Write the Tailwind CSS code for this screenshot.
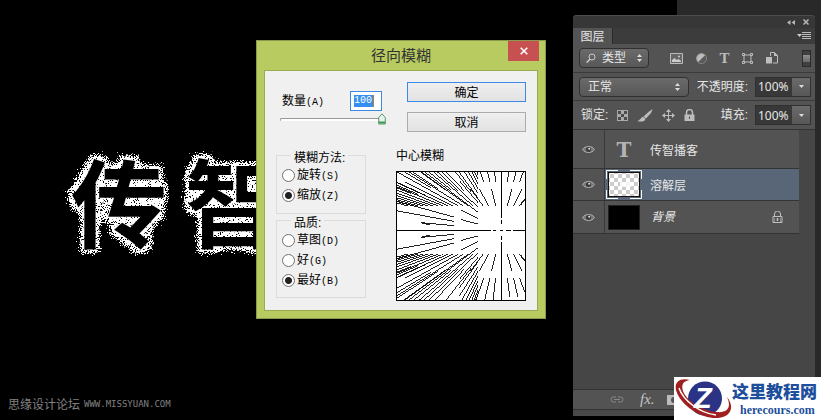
<!DOCTYPE html>
<html lang="zh-CN">
<head>
<meta charset="utf-8">
<title>径向模糊</title>
<script src="https://cdn.jsdelivr.net/npm/@tailwindcss/browser@4"></script>
</head>
<body class="relative flex min-h-screen overflow-hidden bg-black font-['Liberation_Sans','Noto_Sans_CJK_SC',sans-serif] text-xs">

<main class="relative flex flex-1 flex-col justify-end">
  <!-- dissolved lettering on the canvas -->
  <svg class="absolute left-0 top-[130px] h-[150px] w-[300px]" viewBox="0 0 300 150" role="img" aria-label="传智">
    <defs>
      <filter id="dissolve" x="0" y="0" width="300" height="150" filterUnits="userSpaceOnUse" color-interpolation-filters="sRGB">
        <feMorphology in="SourceAlpha" operator="dilate" radius="6" result="fat"/>
        <feGaussianBlur in="fat" stdDeviation="3" result="halo"/>
        <feTurbulence type="fractalNoise" baseFrequency="0.93" numOctaves="2" seed="8" result="noise"/>
        <feComposite in="halo" in2="noise" operator="arithmetic" k2="0.6" k3="1" k4="-0.92" result="mix"/>
        <feColorMatrix in="mix" values="0 0 0 0 1  0 0 0 0 1  0 0 0 0 1  0 0 0 20 0" result="dots"/>
        <feMerge><feMergeNode in="dots"/><feMergeNode in="SourceGraphic"/></feMerge>
      </filter>
    </defs>
    <g filter="url(#dissolve)" class="fill-black font-['Noto_Sans_CJK_SC',sans-serif] text-[96px] font-bold">
      <text x="71" y="110">传</text>
      <text x="185" y="110">智</text>
    </g>
  </svg>
  <footer class="flex items-center gap-1 px-2 pb-2 leading-4 text-[#808080]">
    <span class="font-['Noto_Sans_CJK_SC',sans-serif] text-xs">思缘设计论坛</span>
    <span class="font-['DejaVu_Sans_Mono',monospace] text-[9px]">WWW.MISSYUAN.COM</span>
  </footer>
</main>

<div class="absolute inset-y-0 right-0 w-36 bg-[#292929]"></div>

<!-- layers panel -->
<aside class="relative mr-1.5 mt-[15px] mb-1 flex w-[242px] shrink-0 flex-col rounded-t-sm bg-[#535353] text-[#e6e6e6]">
  <div class="flex h-[13px] items-center justify-end gap-2 rounded-t-sm border-t border-[#4c4c4c] bg-[#373737] px-1.5">
    <button aria-label="折叠"><svg class="h-[5px] w-2 fill-[#b8b8b8]" viewBox="0 0 8 5"><path d="M3.5 0v5L0 2.5zM8 0v5L4.500 2.500z"/></svg></button>
    <button aria-label="关闭面板"><svg class="size-[6px] stroke-[#b8b8b8]" viewBox="0 0 6 6"><path d="M.5.500l5 5m0-5l-5 5" stroke-width="1.500"/></svg></button>
  </div>
  <div class="flex h-4 items-stretch justify-between bg-[#3c3c3c] pr-1">
    <h2 class="flex w-10 items-center justify-center border-r border-[#292929] bg-[#535353] pt-px leading-none">图层</h2>
    <button class="flex items-center" aria-label="面板菜单"><svg class="h-2 w-[14px]" viewBox="0 0 14 8"><path d="M0 2h5L2.500 5z" fill="#ccc"/><path d="M5 .5h9M5 2.500h9M5 4.500h9M5 6.500h9" stroke="#bbb"/></svg></button>
  </div>
  <div class="flex h-[29px] items-center justify-between border-b border-[#3a3a3a] pl-1.5 pr-1">
    <button class="flex h-5 w-[70px] items-center gap-1.5 rounded-sm border border-[#303030] bg-linear-to-b from-[#6b6b6b] to-[#575757] px-1.5">
      <svg class="size-[10px] fill-none stroke-[#ccc]" viewBox="0 0 10 10"><circle cx="6" cy="4" r="3"/><path d="M4 6.200L.6 9.500" stroke-width="1.500"/></svg>
      <span class="flex-1 text-left leading-none">类型</span>
      <svg class="h-2 w-[5px] fill-[#ddd]" viewBox="0 0 5 8"><path d="M0 3h5L2.500 0zM0 5h5L2.500 8z"/></svg>
    </button>
    <div class="flex flex-1 items-center justify-between pl-[21px] pr-[24px]">
      <button aria-label="像素图层"><svg class="h-[11px] w-[13px]" viewBox="0 0 13 11"><path d="M.5.500h12v10H.5z" fill="#666" stroke="#bbb"/><path d="M2 9V7l2.500-2L6.500 7l2-1L11 8v1z" fill="#ccc"/><circle cx="9" cy="3.500" r="1" fill="#ccc"/></svg></button>
      <button aria-label="调整图层"><svg class="size-[11px]" viewBox="0 0 11 11"><circle cx="5.500" cy="5.500" r="4.800" fill="#bdbdbd" stroke="#aaa"/><path d="M9 2.200A4.700 4.700 0 0 1 2.200 9z" fill="#5b5b5b"/></svg></button>
      <button aria-label="文字图层" class="font-['Liberation_Serif',serif] text-[15px] font-bold leading-none text-[#bdbdbd]">T</button>
      <button aria-label="形状图层"><svg class="h-[11px] w-[11px] fill-[#535353] stroke-[#bdbdbd]" viewBox="0 0 11 11"><path d="M2 2h7v7H2z"/><path d="M.5.500h2v2h-2zM8.500.500h2v2h-2zM.5 8.500h2v2h-2zM8.500 8.500h2v2h-2z"/></svg></button>
      <button aria-label="智能对象"><svg class="h-3 w-3" viewBox="0 0 12 12"><path d="M4.500 4V.5h4l3 3v7.500H7" fill="none" stroke="#bdbdbd"/><path d="M8 0v4h4z" fill="#bdbdbd"/><path d="M0 5h6v6.500H0z" fill="#bdbdbd"/></svg></button>
    </div>
    <button aria-label="滤镜开关" class="h-[17px] w-[9px] border border-[#2c2c2c] bg-[#404040]"><span class="block h-[7px] bg-linear-to-b from-[#909090] to-[#6a6a6a]"></span></button>
  </div>
  <div class="flex h-7 items-center justify-between border-b border-[#3a3a3a] pl-1.5 pr-1">
    <button class="flex h-5 w-[110px] items-center justify-between rounded-sm border border-[#303030] bg-linear-to-b from-[#6b6b6b] to-[#575757] px-2">
      <span class="leading-none">正常</span>
      <svg class="h-2 w-[5px] fill-[#ddd]" viewBox="0 0 5 8"><path d="M0 3h5L2.500 0zM0 5h5L2.500 8z"/></svg>
    </button>
    <label class="flex items-center gap-[7px]"><span>不透明度:</span>
      <span class="flex h-5 w-14 border border-[#303030] bg-[#383838]">
        <input class="w-9 min-w-0 px-0.5 font-['Noto_Sans',sans-serif] text-xs leading-none" value="100%">
        <span class="flex flex-1 items-center justify-center bg-linear-to-b from-[#6b6b6b] to-[#575757]"><svg class="h-[3px] w-[5px] fill-[#ddd]" viewBox="0 0 5 3"><path d="M0 0h5L2.500 3z"/></svg></span>
      </span></label>
  </div>
  <div class="flex h-[29px] items-center justify-between border-b border-[#333] pl-2 pr-1">
    <div class="flex items-center gap-[9px]"><span>锁定:</span>
      <button aria-label="锁定透明像素"><svg class="size-[11px]" viewBox="0 0 11 11"><path d="M0 0h11v11H0z" fill="#aaa"/><path d="M1 1h3v3H1zM7 1h3v3H7zM4 4h3v3H4zM1 7h3v3H1zM7 7h3v3H7z" fill="#4c4c4c"/></svg></button>
      <button aria-label="锁定图像像素"><svg class="h-[13px] w-4 fill-[#bdbdbd]" viewBox="0 0 16 13"><path d="M15.800 0L14 4 9 9.500 6.500 7.500 12 2.500zM6 7.800l2.500 2C8 13 3.500 13 0 12 3.500 11.500 3.500 8.500 6 7.800z"/></svg></button>
      <button aria-label="锁定位置"><svg class="size-[13px] stroke-[#bdbdbd] fill-[#bdbdbd]" viewBox="0 0 13 13"><path d="M6.500 2v9M2 6.500h9"/><path d="M4 3h5L6.500 0zM4 10h5l-2.500 3zM3 4v5L0 6.500zM10 4v5l3-2.500z" stroke="none"/></svg></button>
      <button aria-label="锁定全部"><svg class="h-3 w-[11px]" viewBox="0 0 11 12"><path d="M2.500 6V3.500a3 3 0 0 1 6 0V6" fill="none" stroke="#bdbdbd" stroke-width="1.500"/><path d="M.5 5.500h10V12H.5z" fill="#bdbdbd"/><path d="M5 7.500h1v2.500H5z" fill="#555"/></svg></button>
    </div>
    <label class="flex items-center gap-[7px]"><span>填充:</span>
      <span class="flex h-5 w-14 border border-[#303030] bg-[#383838]">
        <input class="w-9 min-w-0 px-0.5 font-['Noto_Sans',sans-serif] text-xs leading-none" value="100%">
        <span class="flex flex-1 items-center justify-center bg-linear-to-b from-[#6b6b6b] to-[#575757]"><svg class="h-[3px] w-[5px] fill-[#ddd]" viewBox="0 0 5 3"><path d="M0 0h5L2.500 3z"/></svg></span>
      </span></label>
  </div>

  <svg class="hidden"><symbol id="eye" viewBox="0 0 13 9"><path d="M.5 4.500C3 .5 10 .5 12.500 4.500 10 8.500 3 8.500.5 4.500z" fill="#777" stroke="#b0b0b0"/><circle cx="6.500" cy="4.500" r="2.500" fill="#3a3a3a"/><circle cx="7.200" cy="3.800" r="1" fill="#ddd"/></symbol></svg>

  <ul class="flex flex-1 flex-col bg-[#464646] pr-4">
    <li class="flex h-[39px] items-stretch border-b border-[#333] bg-[#535353]">
      <button class="flex w-8 items-center justify-center border-r border-[#3a3a3a]" aria-label="显示"><svg class="h-[9px] w-[13px]"><use href="#eye"/></svg></button>
      <span class="flex w-[35px] items-center justify-center pl-[3px] pt-0.5 font-['DejaVu_Serif',serif] text-[20px] font-bold text-[#b4b4b4]">T</span>
      <span class="flex items-center pl-[10px] pt-1">传智播客</span>
    </li>
    <li class="flex h-8 items-stretch border-b border-[#333] bg-[#535353]">
      <button class="flex w-8 items-center justify-center border-r border-[#3a3a3a]" aria-label="显示"><svg class="h-[9px] w-[13px]"><use href="#eye"/></svg></button>
      <span class="flex flex-1 items-center bg-[#596678] pl-px">
        <svg class="h-[29px] w-9" viewBox="0 0 36 29"><defs><pattern id="check" width="8" height="8" patternUnits="userSpaceOnUse"><path d="M0 0h8v8H0z" fill="#fff"/><path d="M0 0h4v4H0zM4 4h4v4H4z" fill="#ccc"/></pattern></defs><path d="M2 2h32v25H2z" fill="#111"/><path d="M3 3h30v23H3z" fill="url(#check)"/><path d="M14 12h11v5H14z" fill="#fff" opacity=".8"/><path d="M.5 9V.5H12M24 .5h11.500V9M35.500 20v8.500H24M12 28.500H.5V20" fill="none" stroke="#fff"/></svg>
        <span class="pl-2 pt-0.5">溶解层</span>
      </span>
    </li>
    <li class="flex h-[33px] items-stretch border-b border-[#333] bg-[#535353]">
      <button class="flex w-8 items-center justify-center border-r border-[#3a3a3a]" aria-label="显示"><svg class="h-[9px] w-[13px]"><use href="#eye"/></svg></button>
      <span class="flex flex-1 items-center pl-[3px] pr-4"><span class="h-[25px] w-8 border border-[#222] bg-black"></span>
        <em class="flex-1 pl-[11px]">背景</em>
        <svg class="h-3 w-[11px] fill-none stroke-[#c0c0c0]" viewBox="0 0 11 12"><path d="M2.500 5.500V3a3 3 0 0 1 6 0v2.500M1 5.500h9v6H1zM2 8h1m5 0h1M2 10h1m5 0h1"/><path d="M5.500 7v3" stroke-width="1.500"/></svg>
      </span>
    </li>
  </ul>
  <div class="flex h-[21px] items-center gap-4 border-y border-[#333] pl-[37px]">
    <button aria-label="链接图层"><svg class="h-[7px] w-[14px] fill-none stroke-[#888]" viewBox="0 0 14 7"><path d="M6 1H3.500a2.500 2.500 0 0 0 0 5H6M8 1h2.500a2.500 2.500 0 0 1 0 5H8M4 3.500h6"/></svg></button>
    <button class="font-['Liberation_Serif',serif] text-[15px] italic leading-none text-[#c4c4c4]" aria-label="图层样式">fx.</button>
    <button class="-ml-1" aria-label="添加蒙版"><svg class="h-[10px] w-[14px]" viewBox="0 0 14 10"><path d="M0 0h14v10H0z" fill="#bbb"/><circle cx="7" cy="5" r="3" fill="#535353"/></svg></button>
  </div>
  <div class="h-1.5 bg-[#484848]"></div>
</aside>

<!-- radial blur dialog -->
<section role="dialog" aria-labelledby="title" class="absolute left-64 top-10 flex w-[290px] flex-col border border-[#8a9a4c] bg-[#b8cb61] px-[7px] pb-[7px] text-black">
  <header class="relative flex h-[29px] items-center justify-center">
    <h1 id="title" class="text-[15px] leading-none text-[#333]">径向模糊</h1>
    <button class="absolute -right-px top-0 flex h-5 w-[31px] items-center justify-center bg-[#c75050]" aria-label="关闭"><svg class="size-2 stroke-white" viewBox="0 0 8 8"><path d="M.7.700l6.600 6.600m0-6.600L.7 7.300" stroke-width="1.600"/></svg></button>
  </header>
  <form class="flex h-[241px] justify-between border border-[#9aab50] bg-[#f0f0f0] px-[11px]">
    <div class="flex w-[108px] flex-col">
      <div class="flex items-center justify-between pl-1.5 pr-0.5 pt-5">
        <label for="amount">数量<span class="font-['Liberation_Mono',monospace] text-[10px]">(A)</span></label>
        <span class="flex h-5 w-8 items-center border border-[#3c8ae6] bg-white pl-[3px]"><input id="amount" class="h-3 w-5 border-r border-[#c27b2c] bg-[#3390f0] font-['Liberation_Mono',monospace] text-[10px] text-white" value="100"></span>
      </div>
      <div class="relative ml-1 mr-0.5 mt-[2px] h-3">
        <input type="range" aria-label="数量" min="1" max="100" value="100" class="absolute inset-0 h-3 w-full opacity-0">
        <div class="pointer-events-none mt-[5px] h-[3px] w-[102px] rounded-l border-l border-t border-[#999] bg-white"></div>
        <svg class="pointer-events-none absolute -right-1 top-0 h-3 w-2" viewBox="0 0 8 12"><path d="M4 .8L7.300 4.500V11H.7V4.500z" fill="#e5f3e8" stroke="#57966a"/><path d="M1 9.500h6" stroke="#3b9c56" stroke-width="2"/></svg>
      </div>
      <fieldset class="relative mt-[30px] flex h-[59px] w-[90px] flex-col gap-[6px] border border-[#dcdcdc] pl-[5px] pt-3">
        <legend class="absolute -top-1 left-[14px] bg-[#f0f0f0] px-[3px] leading-none">模糊方法:</legend>
        <label class="flex h-[14px] items-center gap-0.5"><input type="radio" name="m" class="size-[13px] appearance-none rounded-full border border-[#707070] bg-white checked:bg-[radial-gradient(circle,#222_3px,#fff_4px)]"><span>旋转<span class="font-['Liberation_Mono',monospace] text-[10px]">(S)</span></span></label>
        <label class="flex h-[14px] items-center gap-0.5"><input type="radio" name="m" checked class="size-[13px] appearance-none rounded-full border border-[#707070] bg-white checked:bg-[radial-gradient(circle,#222_3px,#fff_4px)]"><span>缩放<span class="font-['Liberation_Mono',monospace] text-[10px]">(Z)</span></span></label>
      </fieldset>
      <fieldset class="relative mt-1.5 flex h-[78px] w-[90px] flex-col gap-[6px] border border-[#dcdcdc] pl-[5px] pt-3">
        <legend class="absolute -top-1 left-[14px] bg-[#f0f0f0] px-[3px] leading-none">品质:</legend>
        <label class="flex h-[14px] items-center gap-0.5"><input type="radio" name="q" class="size-[13px] appearance-none rounded-full border border-[#707070] bg-white checked:bg-[radial-gradient(circle,#222_3px,#fff_4px)]"><span>草图<span class="font-['Liberation_Mono',monospace] text-[10px]">(D)</span></span></label>
        <label class="flex h-[14px] items-center gap-0.5"><input type="radio" name="q" class="size-[13px] appearance-none rounded-full border border-[#707070] bg-white checked:bg-[radial-gradient(circle,#222_3px,#fff_4px)]"><span>好<span class="font-['Liberation_Mono',monospace] text-[10px]">(G)</span></span></label>
        <label class="flex h-[14px] items-center gap-0.5"><input type="radio" name="q" checked class="size-[13px] appearance-none rounded-full border border-[#707070] bg-white checked:bg-[radial-gradient(circle,#222_3px,#fff_4px)]"><span>最好<span class="font-['Liberation_Mono',monospace] text-[10px]">(B)</span></span></label>
      </fieldset>
    </div>
    <div class="flex w-[130px] flex-col">
      <div class="flex flex-col gap-[10px] pl-[11px] pt-[11px]">
        <button type="button" class="flex h-5 items-center justify-center border border-[#3c8ae6] bg-linear-to-b from-[#efefef] to-[#e2e2e2] pt-0.5">确定</button>
        <button type="button" class="flex h-5 items-center justify-center border border-[#acacac] bg-linear-to-b from-[#efefef] to-[#e2e2e2] pt-0.5">取消</button>
      </div>
      <p class="mt-4 leading-4">中心模糊</p>
      <svg class="mt-[7px] h-[130px] w-[130px] border border-black bg-white" viewBox="33 97 384 384" shape-rendering="crispEdges" stroke="#000" stroke-width="3" fill="none" role="img" aria-label="中心模糊预览">
        <path d="M33 271h281M320 271h9M343 271h8M361 271h14M381 271h36M346 97v138M346 240v14M346 288v13M346 307v174"/>
        <g transform="translate(346 271)" stroke-width="2.600"><path id="rays"/><use href="#rays" transform="scale(1 -1)"/></g>
      </svg>
    </div>
  </form>
</section>

<!-- site badge -->
<a href="#" class="absolute bottom-0 right-0 flex h-[43px] w-[147px] items-center bg-white">
  <svg class="h-[43px] w-[58px] shrink-0" viewBox="0 0 58 43"><circle cx="31" cy="21.500" r="17" fill="#2b3384"/><path d="M16 3C4 0-1 7 3 16 9 30 28 42 44 41 57 40 61 30 53 20 58 31 53 36 43 35 28 34 12 23 9 14 7 8 9 4 16 3z" fill="#a0201f"/><path d="M5 11C9 23 25 36 42 38" fill="none" stroke="#fff" stroke-width="1.500"/><text x="20" y="31" fill="#fff" class="font-['Liberation_Sans',sans-serif] text-[29px] font-bold italic">Z</text></svg>
  <span class="flex flex-col gap-1">
    <span class="font-['Noto_Sans_CJK_SC',sans-serif] text-[17px] font-black leading-[18px] text-[#1d4f9c]">这里教程网</span>
    <span class="pl-2 font-['Liberation_Serif',serif] text-xs font-bold leading-3 text-[#1d4f9c]">herecours.com</span>
  </span>
</a>

<script>
  // Each ray starts at an inner point and runs outwards, away from the centre.
  const rays = [
    [18,-143,1.4],[36,-143,1.4],[54,-143,1.4],[18,-72,1.7],[36,-72,1.7],[54,-72,1.7],[58,-75,1.4],
    [-17,-143,1.5],[-34,-143,1.5],[-52,-143,1.5],[-17,-72,1.7],[-38,-72,1.7],[-54,-72,1.7],
    [-70,-18,1.72],[-70,-35,1.72],[-70,-53,4],[-70,-68,4],
    [-142,-13,1.7],[-142,-26,2.3],[-142,-39,2.3],[-215,-17,1.1]
  ];
  for (let x = 84; x < 290; x += 15) rays.push([-x, -72, x < 142 ? 3.2 : 2]);
  for (let x = 90; x < 290; x += 20) rays.push([-x, -105 - (x * 7 % 23), 2.4]);
  for (let y = 82; y < 200; y += 14) rays.push([-70, -y, 1.8]);
  document.getElementById('rays').setAttribute('d',
    rays.map(([x, y, k]) => `M${x} ${y}L${Math.round(x * k)} ${Math.round(y * k)}`).join(''));
</script>
</body>
</html>
